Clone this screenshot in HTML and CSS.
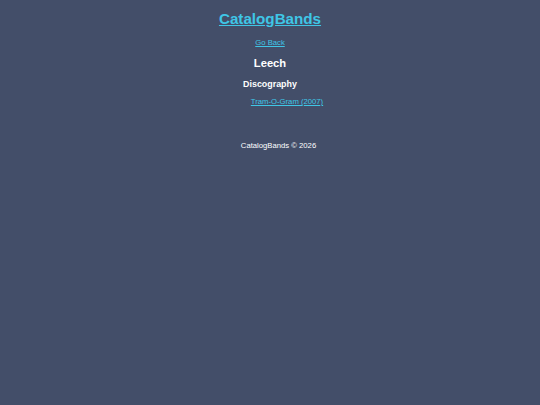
FILE: index.html
```html
<!DOCTYPE html>
<html lang="en">
<head>
<meta charset="utf-8">
<title>CatalogBands - Leech</title>
<link rel="stylesheet" href="styles.css">
</head>
<body>
<header class="site-header">
  <h1 class="site-title"><a href="#">CatalogBands</a></h1>
</header>
<main class="content">
  <p class="back"><a href="#">Go Back</a></p>
  <h2 class="band-name">Leech</h2>
  <h3 class="section-title">Discography</h3>
  <ul class="albums">
    <li><a href="#">Tram-O-Gram (2007)</a></li>
  </ul>
</main>
<footer class="site-footer">CatalogBands © 2026</footer>
</body>
</html>
```
FILE: styles.css
```css
html, body {
  margin: 0;
  padding: 0;
  background: #434e69;
}
body {
  font-family: "Liberation Sans", Arial, sans-serif;
  color: #ffffff;
  text-align: center;
  padding-top: 10px;
}
a {
  color: #3fc6e6;
}
.site-title {
  margin: 0;
  font-size: 15.2px;
  line-height: 18px;
  font-weight: bold;
}
.back {
  margin: 10px 0 0;
  font-size: 7.7px;
  line-height: 9px;
}
.band-name {
  margin: 10px 0 0;
  font-size: 11.2px;
  line-height: 13px;
  font-weight: bold;
}
.section-title {
  margin: 9px 0 0;
  font-size: 8.9px;
  line-height: 10px;
  font-weight: bold;
}
.albums {
  list-style: none;
  margin: 8px 0 0;
  padding: 0 0 0 34px;
  font-size: 7.7px;
  line-height: 9px;
}
.site-footer {
  margin-top: 35px;
  padding-left: 17px;
  font-size: 7.7px;
  line-height: 9px;
}
```
